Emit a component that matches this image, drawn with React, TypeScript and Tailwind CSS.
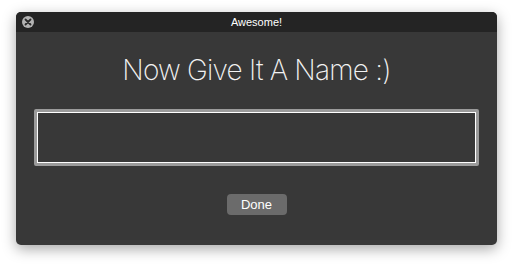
export default function App() {
  return (
    <div className="w-[514px] h-[266px] bg-white pt-[12px] pl-[16px]">
      <div className="w-[481px] h-[233px] rounded-[5px] bg-[#383838] shadow-[0_4px_14px_rgba(0,0,0,0.35)] overflow-hidden flex flex-col font-['Liberation_Sans',sans-serif]">
        <div className="h-[20px] bg-[#242424] flex items-center relative">
          <div className="absolute left-[6px] top-[4px] w-[12px] h-[12px] rounded-full bg-[#b3b3b3] flex items-center justify-center">
            <svg width="8" height="8" viewBox="0 0 8 8">
              <path d="M1.5 1.5 L6.5 6.5 M6.5 1.5 L1.5 6.5" stroke="#2a2a2a" strokeWidth="1.8" strokeLinecap="round" />
            </svg>
          </div>
          <div className="flex-1 text-center text-white text-[11px] leading-none">Awesome!</div>
        </div>
        <div className="flex flex-col items-center">
          <div className="mt-[22px] text-[28px] leading-[32px] text-[#f2f2f2] font-['Inter',sans-serif] font-extralight tracking-[-0.8px]">
            Now Give It A Name :)
          </div>
          <div className="mt-[23px] w-[445px] h-[57px] rounded-[2px] border-[3px] border-[#9b9b9b] p-0">
            <div className="w-full h-full border border-white bg-[#383838]" />
          </div>
          <button className="mt-[28px] w-[60px] h-[21px] rounded-[4px] bg-[#6b6b6b] text-white text-[13px] leading-none">
            Done
          </button>
        </div>
      </div>
    </div>
  );
}
